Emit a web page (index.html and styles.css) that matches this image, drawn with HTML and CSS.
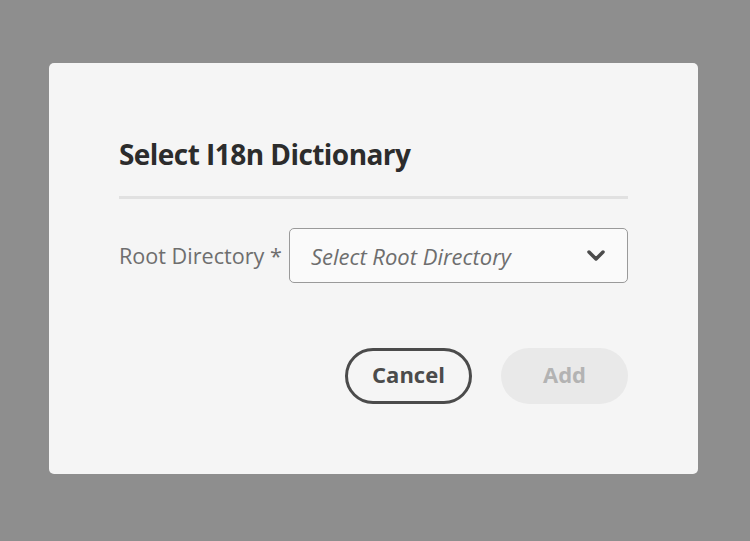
FILE: index.html
```html
<!DOCTYPE html>
<html lang="en">
<head>
    <meta charset="UTF-8">
    <title>Select I18n Dictionary</title>
    <link rel="stylesheet" href="styles.css">
</head>
<body>
    <section class="dialog">
        <h2 class="dialog-title">Select I18n Dictionary</h2>
        <hr class="dialog-divider">
        <div class="field">
            <label class="field-label">Root Directory *</label>
            <button class="picker">
                <span class="picker-placeholder">Select Root Directory</span>
                <svg class="chevron" width="20" height="14" viewBox="0 0 20 14">
                    <polyline points="3,3 10,10 17,3" />
                </svg>
            </button>
        </div>
        <div class="buttons">
            <button class="btn btn-cancel">Cancel</button>
            <button class="btn btn-add" disabled>Add</button>
        </div>
    </section>
</body>
</html>
```

FILE: styles.css
```css
html, body{
    margin: 0;
    height: 100%;
}
body{
    background: #8e8e8e;
    font-family: "Open Sans", "Noto Sans", sans-serif;
    padding: 63px 0 0 49px;
    box-sizing: border-box;
}
.dialog{
    width: 649px;
    height: 411px;
    box-sizing: border-box;
    background: #f5f5f5;
    border-radius: 5px;
    padding: 70px 70px;
}
.dialog-title{
    margin: 0;
    font-size: 28px;
    line-height: 42px;
    font-weight: 700;
    color: #2c2c2c;
    letter-spacing: -0.55px;
}
.dialog-divider{
    margin: 21px 0 0 0;
    border: none;
    height: 3px;
    background: #e1e1e1;
}
.field{
    display: flex;
    align-items: center;
    gap: 7px;
    margin-top: 29px;
}
.field-label{
    font-size: 21.6px;
    color: #6e6e6e;
    white-space: nowrap;
}
.picker{
    flex: 1;
    height: 55px;
    box-sizing: border-box;
    display: flex;
    align-items: center;
    justify-content: space-between;
    padding: 0 21px;
    border: 1.5px solid #9a9a9a;
    border-radius: 5px;
    background: #fafafa;
    font-family: inherit;
}
.picker-placeholder{
    font-size: 22px;
    font-style: italic;
    color: #6e6e6e;
}
.chevron polyline{
    fill: none;
    stroke: #4b4b4b;
    stroke-width: 3.5;
    stroke-linecap: round;
    stroke-linejoin: round;
}
.buttons{
    display: flex;
    justify-content: flex-end;
    gap: 29px;
    margin-top: 65px;
}
.btn{
    height: 56px;
    width: 127px;
    box-sizing: border-box;
    border-radius: 28px;
    font-family: inherit;
    font-size: 22px;
    font-weight: 700;
    padding: 0 0 5px 0;
}
.btn-cancel{
    border: 3.5px solid #4b4b4b;
    background: transparent;
    color: #4b4b4b;
}
.btn-add{
    border: none;
    background: #e9e9e9;
    color: #b3b3b3;
}
```
